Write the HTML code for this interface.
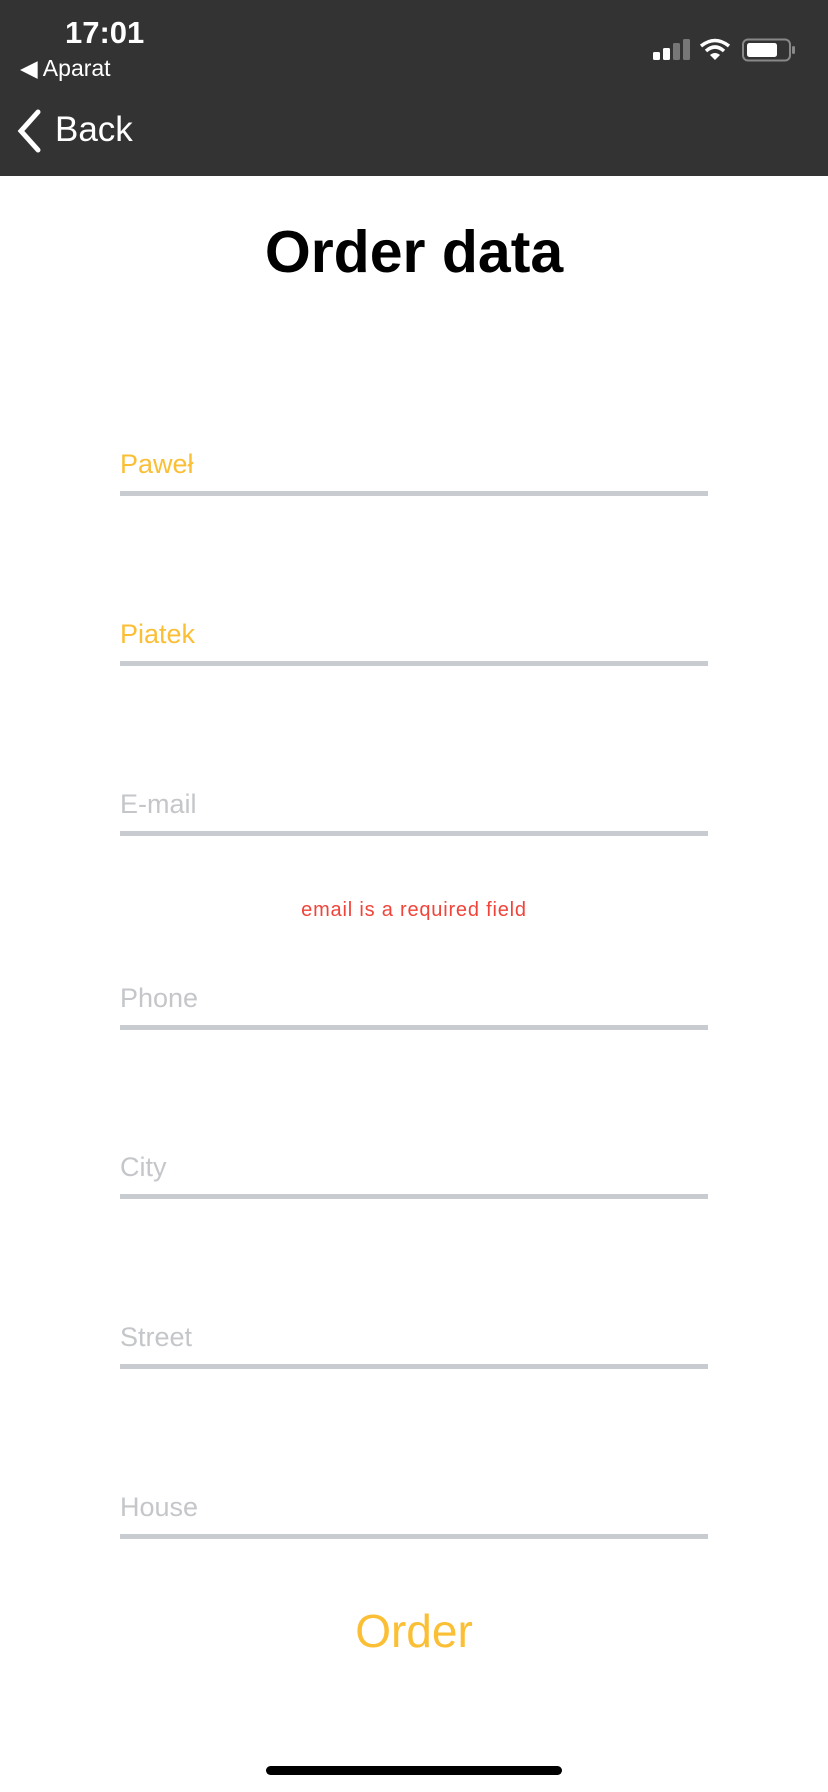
<!DOCTYPE html>
<html><head><meta charset="utf-8"><style>
body{margin:0;width:828px;height:1792px;position:relative;background:#fff;font-family:"Liberation Sans",sans-serif;overflow:hidden}
.hdr{position:absolute;left:0;top:0;width:828px;height:176px;background:#333}
.abs{position:absolute;white-space:nowrap}
.line{position:absolute;left:120px;width:588px;height:5px;background:#c8cbd0}
.f{position:absolute;left:120px;font-size:27px;color:#c4c6c9}
.y{color:#fbbf36}
</style></head><body>
<div class="hdr">
<div class="abs" style="left:65px;top:15px;font-size:31px;font-weight:bold;color:#fff">17:01</div>
<div class="abs" style="left:20px;top:55px;font-size:23px;color:#fff">◀ Aparat</div>
<svg class="abs" style="left:14px;top:108px" width="30" height="46" viewBox="0 0 30 46"><path d="M24 4 L7 23 L24 42" stroke="#fff" stroke-width="5" fill="none" stroke-linecap="round"/></svg>
<div class="abs" style="left:55px;top:110px;font-size:35px;color:#fff">Back</div>
<svg class="abs" style="left:652px;top:38px" width="145" height="24" viewBox="0 0 145 24">
<rect x="1" y="14" width="7" height="8" rx="1.5" fill="#fff"/><rect x="11" y="10" width="7" height="12" rx="1.5" fill="#fff"/><rect x="21" y="5" width="7" height="17" rx="1.5" fill="#777"/><rect x="31" y="1" width="7" height="21" rx="1.5" fill="#777"/>
<path d="M49 8 Q63 -3 77 8" stroke="#fff" stroke-width="3.5" fill="none"/><path d="M54 13 Q63 5 72 13" stroke="#fff" stroke-width="3.5" fill="none"/><path d="M58 17 L63 22 L68 17 Q63 13 58 17Z" fill="#fff"/>
<rect x="91" y="1.5" width="47" height="21" rx="5" stroke="#888" stroke-width="2" fill="none"/><rect x="95" y="5" width="30" height="14" rx="2.5" fill="#fff"/><rect x="140" y="8" width="3" height="8" rx="1.5" fill="#888"/>
</svg>
</div>
<div class="abs" style="left:0;width:828px;text-align:center;top:218px;font-size:59px;font-weight:bold;color:#000">Order data</div>

<div class="f y" style="top:449px">Paweł</div><div class="line" style="top:491px"></div>
<div class="f y" style="top:619px">Piatek</div><div class="line" style="top:661px"></div>
<div class="f" style="top:789px">E-mail</div><div class="line" style="top:831px"></div>
<div class="abs" style="left:0;width:828px;text-align:center;top:899px;font-size:20px;letter-spacing:0.8px;color:#f0443a">email is a required field</div>
<div class="f" style="top:983px">Phone</div><div class="line" style="top:1025px"></div>
<div class="f" style="top:1152px">City</div><div class="line" style="top:1194px"></div>
<div class="f" style="top:1322px">Street</div><div class="line" style="top:1364px"></div>
<div class="f" style="top:1492px">House</div><div class="line" style="top:1534px"></div>
<div class="abs" style="left:0;width:828px;text-align:center;top:1604px;font-size:46px;color:#fbbf36">Order</div>
<div class="abs" style="left:266px;top:1766px;width:296px;height:9px;border-radius:5px;background:#000"></div>
</body></html>
